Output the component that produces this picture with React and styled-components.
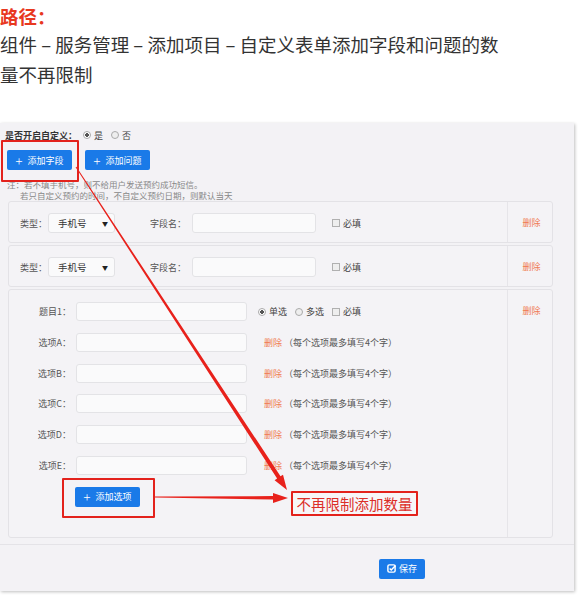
import React from 'react'
import styled, { createGlobalStyle } from 'styled-components'

const GlobalStyle = createGlobalStyle`
  body {
    margin: 0;
    background: #fff;
    font-family: "Noto Sans CJK SC", "Noto Sans", sans-serif;
  }
`

const Page = styled.div`
  width: 580px;
  height: 595px;
  overflow: hidden;
  position: relative;
`

const Title = styled.div`
  margin-top: 3px;
  font-size: 18.5px;
  line-height: 26px;
  font-weight: bold;
  color: #e8381f;
`

const Path = styled.p`
  margin: 0;
  width: 510px;
  font-size: 18.5px;
  line-height: 30px;
  color: #333;
`

const Shot = styled.div`
  position: relative;
  margin-top: 34px;
  width: 574px;
  height: 468px;
  padding-top: 5px;
  box-sizing: border-box;
  background: #f3f2f5;
  box-shadow: 1px 1px 3px rgba(0, 0, 0, 0.25);
  font-size: 9px;
  color: #555;
`

const TopRow = styled.div`
  display: flex;
  align-items: center;
  gap: 6px;
  height: 14px;
  padding-left: 5px;
  font-weight: bold;
  color: #333;
`

const Choice = styled.span`
  display: inline-flex;
  align-items: center;
  gap: 3px;
  font-weight: normal;
  color: #444;
  margin-right: ${p => p.$space || 4}px;
`

const Radio = styled.span`
  width: 6px;
  height: 6px;
  border-radius: 50%;
  border: 1px solid #aaa;
  background: ${p => (p.$on ? 'radial-gradient(circle, #555 0 1.6px, #fff 2px)' : '#eee')};
`

const Check = styled.span`
  width: 6px;
  height: 6px;
  border: 1px solid #b0b0b0;
  background: #eee;
`

const ButtonRow = styled.div`
  display: flex;
  gap: 13px;
  margin-top: 8px;
  padding-left: 7px;
`

const BlueButton = styled.div`
  display: flex;
  align-items: center;
  justify-content: center;
  gap: 5px;
  width: 65px;
  height: 20px;
  border-radius: 2px;
  background: #1a7ae8;
  color: #fff;
  font-size: 9px;
`

const Plus = styled.span`
  font-size: 13px;
  line-height: 1;
  font-weight: 300;
`

const Note = styled.div`
  margin-top: 9px;
  padding-left: 7px;
  line-height: 11px;
  height: 22px;
  color: #888;
  font-size: 8.5px;
`

const NoteLine = styled.div`
  height: 11px;
  white-space: nowrap;
  padding-left: ${p => p.$indent || 0}px;
`

const Cards = styled.div`
  display: flex;
  flex-direction: column;
  gap: 2px;
  padding: 0 21px 0 8px;
`

const Card = styled.div`
  display: flex;
  border: 1px solid #e3e2e6;
  border-radius: 3px;
  background: #f4f3f6;
`

const CardMain = styled.div`
  flex: 1;
  display: flex;
  flex-direction: ${p => (p.$column ? 'column' : 'row')};
  align-items: ${p => (p.$column ? 'stretch' : 'center')};
  gap: ${p => (p.$column ? '11.8px' : '0')};
  padding: ${p => (p.$column ? '12px 0 30px 0' : '11px 0 9px 11px')};
`

const DeleteCol = styled.div`
  width: 45px;
  box-sizing: border-box;
  border-left: 1px solid #e6e5e9;
  display: flex;
  justify-content: center;
  align-items: ${p => (p.$top ? 'flex-start' : 'center')};
  padding-top: ${p => (p.$top ? '14px' : '0')};
  padding-left: 3px;
  color: #f07a50;
`

const Label = styled.span`
  color: #555;
  white-space: nowrap;
  width: ${p => p.$w}px;
`

const Select = styled.div`
  display: flex;
  align-items: center;
  justify-content: space-between;
  width: 67px;
  height: 20px;
  box-sizing: border-box;
  padding: 0 6px 0 9px;
  border: 1px solid #e2e2e5;
  border-radius: 3px;
  background: #fafafb;
  color: #333;
  font-size: 9.5px;
  margin-right: 35px;
`

const Caret = styled.span`
  font-size: 6px;
  color: #222;
`

const Input = styled.div`
  width: ${p => p.$w}px;
  height: ${p => p.$h || 20}px;
  box-sizing: border-box;
  border: 1px solid #e3e3e6;
  border-radius: 3px;
  background: #fafafb;
  margin-right: ${p => p.$mr || 0}px;
`

const QRow = styled.div`
  display: flex;
  align-items: center;
  height: 19px;
`

const QLabel = styled.span`
  width: 62px;
  text-align: right;
  color: #555;
  margin-right: 5px;
`

const Del = styled.span`
  color: #f07a50;
  margin-right: 2px;
`

const Hint = styled.span`
  color: #555;
`

const AddRow = styled.div`
  display: flex;
  padding-left: 66px;
`

const Footer = styled.div`
  margin-top: 6px;
  border-top: 1px solid #e4e3e7;
  padding: 14px 0 0 379px;
`

const SaveButton = styled(BlueButton)`
  width: 46px;
  gap: 3px;
`

const RedBox = styled.div`
  position: absolute;
  left: ${p => p.$x}px;
  top: ${p => p.$y}px;
  width: ${p => p.$w}px;
  height: ${p => p.$h}px;
  box-sizing: border-box;
  border: 2px solid #e3221c;
  border-radius: 1px;
`

const Callout = styled(RedBox)`
  display: flex;
  align-items: center;
  justify-content: center;
  background: #f7f6f8;
  color: #dc2e28;
  font-size: 14.5px;
  white-space: nowrap;
`

const Overlay = styled.svg`
  position: absolute;
  left: 0;
  top: 0;
  pointer-events: none;
`

function arrow(x1, y1, x2, y2, w0, w1, headLen, headW) {
  const dx = x2 - x1
  const dy = y2 - y1
  const len = Math.hypot(dx, dy)
  const ux = dx / len
  const uy = dy / len
  const px = -uy
  const py = ux
  const bx = x2 - ux * headLen
  const by = y2 - uy * headLen
  const pts = [
    [x1 + px * w0 / 2, y1 + py * w0 / 2],
    [bx + px * w1 / 2, by + py * w1 / 2],
    [bx + px * headW / 2, by + py * headW / 2],
    [x2, y2],
    [bx - px * headW / 2, by - py * headW / 2],
    [bx - px * w1 / 2, by - py * w1 / 2],
    [x1 - px * w0 / 2, y1 - py * w0 / 2],
  ]
  return pts.map(p => p[0].toFixed(1) + ',' + p[1].toFixed(1)).join(' ')
}

function SaveIcon() {
  return (
    <svg width="9" height="9" viewBox="0 0 10 10">
      <rect x="1" y="1" width="8" height="8" rx="1.5" fill="none" stroke="#fff" strokeWidth="1.6" />
      <path d="M3 5 L4.7 6.6 L9.5 1.8" fill="none" stroke="#fff" strokeWidth="1.6" />
    </svg>
  )
}

function FieldCard() {
  return (
    <Card>
      <CardMain>
        <Label $w={28}>类型：</Label>
        <Select>
          <span>手机号</span>
          <Caret>▼</Caret>
        </Select>
        <Label $w={42}>字段名：</Label>
        <Input $w={124} $mr={16} />
        <Choice><Check />必填</Choice>
      </CardMain>
      <DeleteCol>删除</DeleteCol>
    </Card>
  )
}

const options = ['A', 'B', 'C', 'D', 'E']

export default function App() {
  return (
    <Page>
      <GlobalStyle />
      <Title>路径：</Title>
      <Path>组件 – 服务管理 – 添加项目 – 自定义表单添加字段和问题的数量不再限制</Path>

      <Shot>
        <TopRow>
          是否开启自定义：
          <Choice $space={2}><Radio $on />是</Choice>
          <Choice><Radio />否</Choice>
        </TopRow>

        <ButtonRow>
          <BlueButton><Plus>+</Plus>添加字段</BlueButton>
          <BlueButton><Plus>+</Plus>添加问题</BlueButton>
        </ButtonRow>

        <Note>
          <NoteLine>注：若不填手机号，则不给用户发送预约成功短信。</NoteLine>
          <NoteLine $indent={13}>若只自定义预约的时间，不自定义预约日期，则默认当天</NoteLine>
        </Note>

        <Cards>
          <FieldCard />
          <FieldCard />
          <Card>
            <CardMain $column>
              <QRow>
                <QLabel>题目1：</QLabel>
                <Input $w={171} $h={19} $mr={11} />
                <Choice $space={8}><Radio $on />单选</Choice>
                <Choice $space={8}><Radio />多选</Choice>
                <Choice><Check />必填</Choice>
              </QRow>
              {options.map(o => (
                <QRow key={o}>
                  <QLabel>选项{o}：</QLabel>
                  <Input $w={171} $h={19} $mr={17} />
                  <Del>删除</Del>
                  <Hint>（每个选项最多填写4个字）</Hint>
                </QRow>
              ))}
              <AddRow>
                <BlueButton><Plus>+</Plus>添加选项</BlueButton>
              </AddRow>
            </CardMain>
            <DeleteCol $top>删除</DeleteCol>
          </Card>
        </Cards>

        <Footer>
          <SaveButton><SaveIcon />保存</SaveButton>
        </Footer>

        <RedBox $x={1} $y={17} $w={78} $h={42} />
        <RedBox $x={62} $y={355} $w={93} $h={40} />
        <Callout $x={291} $y={368} $w={127} $h={25}>不再限制添加数量</Callout>

        <Overlay width="574" height="468" viewBox="0 0 574 468">
          <polygon points={arrow(76, 44, 287, 367, 1, 4, 15, 10)} fill="#e8211b" />
          <polygon points={arrow(155, 374, 288, 375, 1.2, 3.5, 15, 10)} fill="#e8211b" />
        </Overlay>
      </Shot>
    </Page>
  )
}
